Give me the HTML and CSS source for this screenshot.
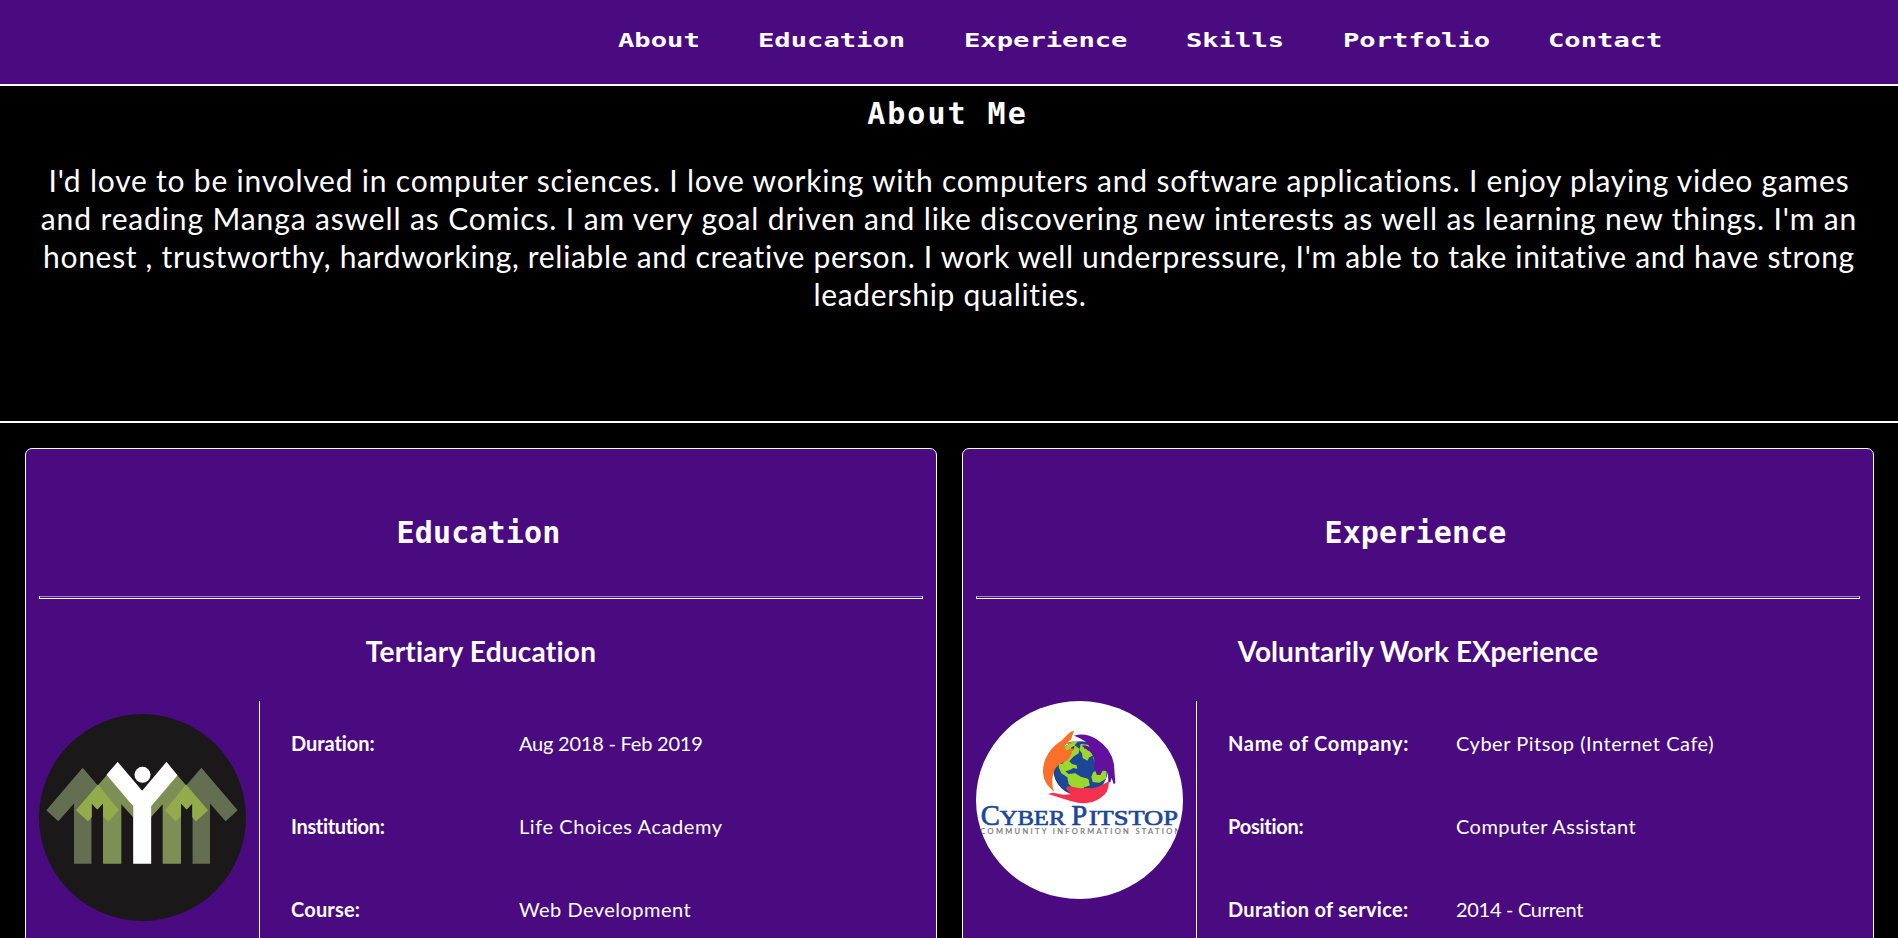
FILE: index.html
```html
<!DOCTYPE html>
<html lang="en">
<head>
<meta charset="utf-8">
<title>About Me</title>
<link rel="stylesheet" href="styles.css">
</head>
<body>
<nav class="nav">
  <a class="nav-link"><span>About</span></a>
  <a class="nav-link"><span>Education</span></a>
  <a class="nav-link"><span>Experience</span></a>
  <a class="nav-link"><span>Skills</span></a>
  <a class="nav-link"><span>Portfolio</span></a>
  <a class="nav-link"><span>Contact</span></a>
</nav>

<section class="about">
  <h1 class="title title-wide">About Me</h1>
  <p class="intro">
    <span class="line l1">I'd love to be involved in computer sciences. I love working with computers and software applications. I enjoy playing video games</span>
    <span class="line l2">and reading Manga aswell as Comics. I am very goal driven and like discovering new interests as well as learning new things. I'm an</span>
    <span class="line l3">honest , trustworthy, hardworking, reliable and creative person. I work well underpressure, I'm able to take initative and have strong</span>
    <span class="line l4">leadership qualities.</span>
  </p>
</section>

<main class="cards">
  <section class="card">
    <h2 class="title">Education</h2>
    <hr class="rule">
    <h3 class="subtitle">Tertiary Education</h3>
    <div class="entry">
      <div class="logo-col logo-low">
        <svg class="logo" width="207" height="207" viewBox="57 71.5 621 621">
          <circle cx="367.5" cy="382" r="310.5" fill="#1b1819"/>
          <g id="side">
            <path fill="#646f52" d="M188 233L79 360l36 33 47-53v181h53V340l17 18 33 35 32-33z"/>
            <path fill="#7d8f54" d="M262 253L168 360l36 33 45-53v181h55V342l36 40v-34z"/>
            <path fill="#1b1819" d="M215 340l17 18 17-18v181h-34z"/>
            <path fill="#93ab4a" d="M234 283L168 360l36 33 11-12v-41l17 18 17-18v39l16 14 32-33z"/>
          </g>
          <use href="#side" transform="matrix(-1 0 0 1 732 0)"/>
          <path fill="#fff" d="M293 215l73.500 87 73-87 33 40-79 93v173h-54V348l-80-94z"/>
          <circle cx="367.500" cy="254" r="24" fill="#fff"/>
        </svg>
      </div>
      <dl class="facts">
        <dt class="f1">Duration:</dt><dd class="v1">Aug 2018 - Feb 2019</dd>
        <dt class="f2">Institution:</dt><dd class="v2">Life Choices Academy</dd>
        <dt class="f3">Course:</dt><dd class="v3">Web Development</dd>
      </dl>
    </div>
  </section>

  <section class="card">
    <h2 class="title title-right">Experience</h2>
    <hr class="rule">
    <h3 class="subtitle subtitle-right">Voluntarily Work EXperience</h3>
    <div class="entry">
      <div class="logo-col">
        <svg class="logo" width="207" height="198" viewBox="48 33 621 594">
          <defs>
            <clipPath id="oval"><ellipse cx="358.500" cy="330" rx="310.500" ry="297"/></clipPath>
            <clipPath id="globe"><circle cx="362" cy="236" r="82"/></clipPath>
          </defs>
          <g clip-path="url(#oval)">
            <path fill="#fff" d="M48 33h621v594H48z"/>
            <g clip-path="url(#globe)">
              <path fill="#1d4796" d="M270 140h190v190H270z"/>
              <path fill="#9bd82d" d="M300 182l26-24 28-4-10 12 14 10-2 14-16 10-12 14 8 8 14 4 2 10-12-2-10 6-14 4 10 8 20-2 16 10 22 6 4 8-14 14-8 18-14 10-14-8 0-14-12-12-4-20-18-12-8-18z"/>
              <path fill="#9bd82d" d="M362 162l24 2 12 18 2 14-12 6-6 10-14-8-2-14-8-10zM398 200l16-6 20 14 6 20-10 8-16-4-10-16zM400 246l18-6 22 4-2 22-20 12-20-2-4-16zM366 278l20-4 4 12-16 6z"/>
              <path fill="#143c80" d="M296 186l14-8 6 12-12 6zM334 172l10-4-4 12-8 2zM300 206l10 2 0 12-8 2zM372 170l6 2-4 6z"/>
              <path fill="#17356f" opacity=".75" d="M286 206q-16 70 40 102l-30-8-22-60z"/>
            </g>
            <path fill="#f9702a" d="M342 124q-5-3-18 8l-20 20q-34 20-49 58-16 48 10 78l17 18q-8-24-4-46 4-28 22-38l22-11q12-12 14-28l10-7-15-1-13 7-4-14 12-14q10-6 9-12z"/>
            <path fill="#f9702a" d="M312 158l40-6-26 11z"/>
            <path fill="#63109f" d="M340 138q36-12 70 10 44 28 52 76l4 56-5 2-6-18-4 12-6 3-1-27q-10-22-17-8l-6 11-11-1-7-22q2-20-4-34-6-14-14-16l-20-15 10-1 15 5-15-17q-14-10-31-16z"/>
            <path fill="#f3304e" d="M264 312l14-4 32 6 22-1-14-19q2-7 18-4l24 5 28-1q22 3 36-8l23-12q0 36-27 51-34 24-86 9z"/>
            <text class="brand" fill="#1e4698" y="405"><tspan x="62" font-size="86">C</tspan><tspan x="119" font-size="65" textLength="197" lengthAdjust="spacingAndGlyphs">YBER</tspan><tspan x="334" font-size="86">P</tspan><tspan x="386" font-size="65" textLength="268" lengthAdjust="spacingAndGlyphs">ITSTOP</tspan></text>
            <text class="tagline" fill="#77777a" x="61" y="431" font-size="22.500" textLength="600">COMMUNITY INFORMATION STATION</text>
          </g>
        </svg>
      </div>
      <dl class="facts">
        <dt class="f4">Name of Company:</dt><dd class="v4">Cyber Pitsop (Internet Cafe)</dd>
        <dt class="f5">Position:</dt><dd class="v5">Computer Assistant</dd>
        <dt class="f6">Duration of service:</dt><dd class="v6">2014 - Current</dd>
      </dl>
    </div>
  </section>
</main>
</body>
</html>
```
FILE: styles.css
```css
* { box-sizing: border-box; }
html, body { height: 100%; }
body {
  margin: 0;
  overflow: hidden;
  background: #000;
  color: #fff;
  font-family: Lato, sans-serif;
}
h1, h2, h3, p, dl, dd { margin: 0; }

.nav {
  display: flex;
  gap: 58.5px;
  height: 86px;
  padding: 25px 0 0 618px;
  background: #4b0b80;
  border-bottom: 2px solid #fff;
}
/* 11.56px glyph advance stretched to 16.35px */
.nav-link {
  font: bold 19.2px/32px "DejaVu Sans Mono", monospace;
  white-space: nowrap;
}
.nav-link span {
  display: inline-block;
  transform: scaleX(1.415);
  transform-origin: left;
}
.nav-link:nth-child(1) { width: 81.8px; }
.nav-link:nth-child(2) { width: 147.2px; }
.nav-link:nth-child(3) { width: 163.5px; }
.nav-link:nth-child(4) { width: 98.1px; }
.nav-link:nth-child(5) { width: 147.2px; }
.nav-link:nth-child(6) { width: 114.5px; }

.title {
  font: bold 30px/38px "DejaVu Sans Mono", monospace;
  text-align: center;
}
.title-wide { letter-spacing: 2px; padding-right: 3px; }

.about {
  height: 337px;
  padding-top: 9px;
  border-bottom: 2px solid #fff;
}
.intro {
  margin-top: 28px;
  font-size: 30px;
  line-height: 38px;
  text-align: center;
}
.line { display: block; white-space: nowrap; }
.l1 { letter-spacing: 0.79px; }
.l2 { letter-spacing: 0.87px; }
.l3 { letter-spacing: 0.68px; }
.l4 { letter-spacing: 0.65px; padding-left: 2px; }

.cards {
  display: grid;
  grid-template-columns: 912px 912px;
  gap: 25px;
  padding: 25px 0 0 25px;
}
.card {
  height: 620px;
  padding: 65px 13px 0;
  background: #4b0b80;
  border: 1px solid #fff;
  border-radius: 7px;
}
.card .title { padding-right: 5px; letter-spacing: 0.15px; }
.rule {
  height: 3px;
  margin: 44px 0 0;
  border: 1px solid #fff;
  border-top-color: #a688c0;
}
.subtitle {
  margin-top: 34px;
  font-size: 28px;
  line-height: 36px;
  text-align: center;
  letter-spacing: 0.24px;
}
.subtitle-right { letter-spacing: 0.04px; }

.entry { display: flex; margin-top: 32px; }
.logo-col { width: 220px; }
.logo-low { padding-top: 13px; }
.logo { display: block; }
.brand { font-family: "Liberation Serif", serif; stroke: #1e4698; stroke-width: 2; }
.tagline { font-family: Lato, sans-serif; stroke: #77777a; stroke-width: 0.6; }

.facts {
  display: grid;
  grid-template-columns: 228px 1fr;
  flex: 1;
  height: 330px;
  padding: 1px 0 0 31px;
  align-content: start;
  border-left: 1px solid #fff;
  font-size: 20px;
  line-height: 83px;
}
dt { font-weight: 700; }
dt, dd { white-space: nowrap; }
.f1 { letter-spacing: -0.06px; }
.f2 { letter-spacing: -0.34px; }
.f3 { letter-spacing: 0.193px; }
.f4 { letter-spacing: 0.69px; }
.f5 { letter-spacing: -0.257px; }
.f6 { letter-spacing: 0.29px; }
.v1 { letter-spacing: -0.22px; }
.v2 { letter-spacing: 0.57px; }
.v3 { letter-spacing: 0.48px; }
.v4 { letter-spacing: 0.529px; }
.v5 { letter-spacing: 0.45px; }
.v6 { letter-spacing: -0.3px; }
```
